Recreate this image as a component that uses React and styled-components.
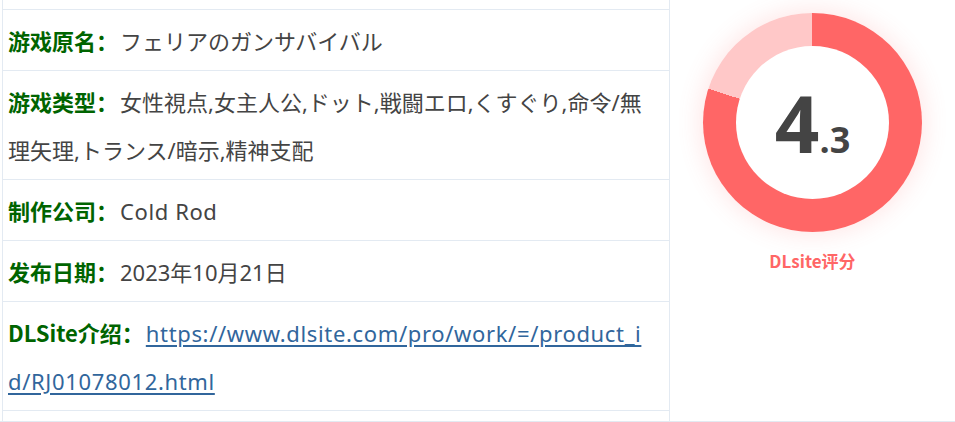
import React from "react";
import styled, { createGlobalStyle } from "styled-components";

const GlobalStyle = createGlobalStyle`
  html, body {
    margin: 0;
    padding: 0;
    background: #fff;
  }
  body {
    font-family: "Noto Sans", "Noto Sans CJK SC", "Noto Sans CJK JP", sans-serif;
  }
`;

const Wrapper = styled.div`
  width: 955px;
  height: 422px;
  box-sizing: border-box;
  display: flex;
  border-bottom: 1px solid #e3eaf2;
  overflow: hidden;
`;

const InfoTable = styled.div`
  margin-left: 2px;
  width: 668px;
  box-sizing: border-box;
  padding: 9px 0;
  border-left: 1px solid #e3eaf2;
  border-right: 1px solid #e3eaf2;
`;

const Row = styled.div`
  padding: 6px 22px 6px 5px;
  border-top: 1px solid #e3eaf2;
  font-size: 22px;
  line-height: 48px;
  height: ${(p) => (p.lines || 1) * 48}px;
  color: #444;
  word-break: break-all;
  &:last-child {
    border-bottom: 1px solid #e3eaf2;
  }
`;

const Label = styled.b`
  font-family: "Noto Sans CJK SC", sans-serif;
  color: #006400;
  font-weight: 700;
  margin-right: 2px;
`;

const Latin = styled.span`
  letter-spacing: 0.6px;
`;

const Link = styled.a`
  color: #31669c;
  letter-spacing: 0.65px;
  text-decoration: underline;
  text-underline-offset: 3px;
`;

const ScorePane = styled.div`
  flex: 1;
  display: flex;
  flex-direction: column;
  align-items: center;
  padding-top: 13px;
`;

const Donut = styled.div`
  width: 219px;
  height: 219px;
  border-radius: 50%;
  background: conic-gradient(#ff6666 0 80%, #ffc8c8 80% 100%);
  box-shadow: 0 0 22px 4px rgba(255, 110, 110, 0.16);
  display: flex;
  align-items: center;
  justify-content: center;
`;

const DonutHole = styled.div`
  width: 153px;
  height: 153px;
  border-radius: 50%;
  background: #fff;
  display: flex;
  align-items: center;
  justify-content: center;
`;

const Score = styled.div`
  color: #444;
  font-family: "Open Sans", "Noto Sans", sans-serif;
  font-weight: 700;
  line-height: 1;
  white-space: nowrap;
`;

const Big = styled.span`
  font-size: 78px;
`;

const Small = styled.span`
  font-size: 36px;
`;

const ScoreLabel = styled.div`
  margin-top: 17px;
  color: #ff6666;
  font-family: "Noto Sans CJK SC", sans-serif;
  font-weight: 700;
  font-size: 17px;
  line-height: 23px;
`;

const rows = [
  { label: "游戏原名：", value: "フェリアのガンサバイバル" },
  {
    label: "游戏类型：",
    value: "女性視点,女主人公,ドット,戦闘エロ,くすぐり,命令/無理矢理,トランス/暗示,精神支配",
    lines: 2,
  },
  { label: "制作公司：", value: <Latin>Cold Rod</Latin> },
  { label: "发布日期：", value: "2023年10月21日" },
];

const url = "https://www.dlsite.com/pro/work/=/product_id/RJ01078012.html";

export default function App() {
  return (
    <>
      <GlobalStyle />
      <Wrapper>
        <InfoTable>
          {rows.map((r) => (
            <Row key={r.label} lines={r.lines}>
              <Label>{r.label}</Label>
              {r.value}
            </Row>
          ))}
          <Row lines={2}>
            <Label>DLSite介绍：</Label>
            <Link href={url}>{url}</Link>
          </Row>
        </InfoTable>
        <ScorePane>
          <Donut>
            <DonutHole>
              <Score>
                <Big>4</Big>
                <Small>.3</Small>
              </Score>
            </DonutHole>
          </Donut>
          <ScoreLabel>DLsite评分</ScoreLabel>
        </ScorePane>
      </Wrapper>
    </>
  );
}
